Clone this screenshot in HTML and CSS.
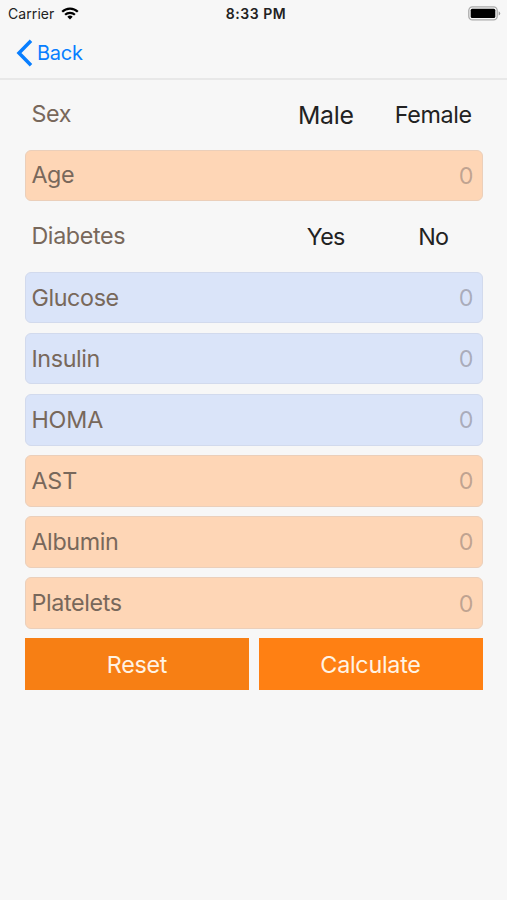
FILE: index.html
```html
<!DOCTYPE html>
<html lang="en">
<head>
<meta charset="utf-8">
<meta name="viewport" content="width=device-width, initial-scale=1">
<title>Calculator</title>
<link rel="stylesheet" href="styles.css">
</head>
<body>
<header class="top">
  <div class="status">
    <div class="status-left"><span class="carrier">Carrier</span>
      <svg class="wifi" width="18" height="13" viewBox="0 0 18 13" fill="none" stroke="#000" stroke-width="2.2"><path d="M1.2 4.8a11 11 0 0 1 15.6 0M4.1 7.8a7 7 0 0 1 9.8 0"/><path d="M9 12.4 6.3 9.8a3.8 3.8 0 0 1 5.4 0z" fill="#000" stroke="none"/></svg>
    </div>
    <span class="time">8:33 PM</span>
    <svg class="battery" width="33" height="15" viewBox="0 0 33 15"><rect x=".8" y=".9" width="28.4" height="13" rx="3.6" fill="#f7f7f7" stroke="#aaa" stroke-width="1.3"/><rect x="2.7" y="2.8" width="24.6" height="9.2" rx="1.5"/><path d="M30.7 5.2q1.5.7 1.5 2.2t-1.5 2.2z" fill="#999"/></svg>
  </div>
  <a class="back"><svg width="17" height="28" viewBox="0 0 17 28" fill="none" stroke="#087eff" stroke-width="3.5"><path d="M15 1.8 3 14l12 12.2"/></svg><span>Back</span></a>
</header>
<main class="form">
  <div class="row choice"><span class="label">Sex</span><span class="option male">Male</span><span class="option">Female</span></div>
  <div class="row field orange"><span class="label">Age</span><span class="value">0</span></div>
  <div class="row choice"><span class="label">Diabetes</span><span class="option short">Yes</span><span class="option short">No</span></div>
  <div class="row field blue"><span class="label">Glucose</span><span class="value">0</span></div>
  <div class="row field blue"><span class="label">Insulin</span><span class="value">0</span></div>
  <div class="row field blue"><span class="label acronym">HOMA</span><span class="value">0</span></div>
  <div class="row field orange"><span class="label acronym">AST</span><span class="value">0</span></div>
  <div class="row field orange"><span class="label">Albumin</span><span class="value">0</span></div>
  <div class="row field orange"><span class="label">Platelets</span><span class="value">0</span></div>
  <div class="actions"><button class="reset">Reset</button><button class="calculate">Calculate</button></div>
</main>
</body>
</html>
```
FILE: styles.css
```css
* { box-sizing: border-box; }
body { margin: 0; height: 900px; background: #f7f7f7; font-family: Inter, sans-serif; color: #222; overflow: hidden; }
.top { height: 80px; border-bottom: 2px solid #e8e8e8; }
.status { height: 28px; padding: 0 6px 0 8px; display: grid; grid-template-columns: 1fr auto 1fr; align-items: center; }
.status-left { display: flex; align-items: center; gap: 7px; }
.carrier { font-size: 14px; letter-spacing: .08px; margin-top: -2px; }
.wifi { margin-top: -2px; }
.time { font-size: 14px; font-weight: 600; letter-spacing: .55px; padding-left: 3px; line-height: 16px; margin-top: -1px; }
.battery { justify-self: end; margin-top: -2px; }
.back { display: flex; align-items: center; gap: 4.5px; height: 49px; padding-left: 15.5px; color: #087eff; font-size: 20px; letter-spacing: -.25px; }
.form { display: grid; grid-auto-rows: 51.6px; row-gap: 9.5px; padding: 8.5px 24.5px 0 25px; }
.row { display: flex; align-items: center; padding: 0 9px 0 6.4px; font-size: 23.3px; line-height: 28px; }
.field { justify-content: space-between; border: 1px solid; border-radius: 6px; padding: 0 8px 0 5.4px; }
.orange { background: #fed6b6; border-color: #ebcfba; }
.blue { background: #dae4f9; border-color: #d2daed; }
.label { color: #78685b; letter-spacing: -.36px; }
.acronym { letter-spacing: -.1px; }
.value { color: rgba(90, 80, 85, .38); padding-top: 1px; }
.choice { display: grid; grid-template-columns: 1fr 107.5px 107.5px; padding-right: 0; margin-right: -4.5px; }
.option { text-align: center; letter-spacing: -.35px; padding-top: 1.5px; }
.short { letter-spacing: -.7px; }
.male { font-size: 24.8px; letter-spacing: -.3px; padding-top: 2px; }
.actions { display: grid; grid-template-columns: 1fr 1fr; gap: 9.5px; }
.actions button { border: 0; border-radius: 0; padding: 1px 0 0; color: #fff3e4; font: 23.3px/28px Inter, sans-serif; letter-spacing: -.25px; }
.reset { background: #f77f14; }
.calculate { background: #ff8013; }
```
